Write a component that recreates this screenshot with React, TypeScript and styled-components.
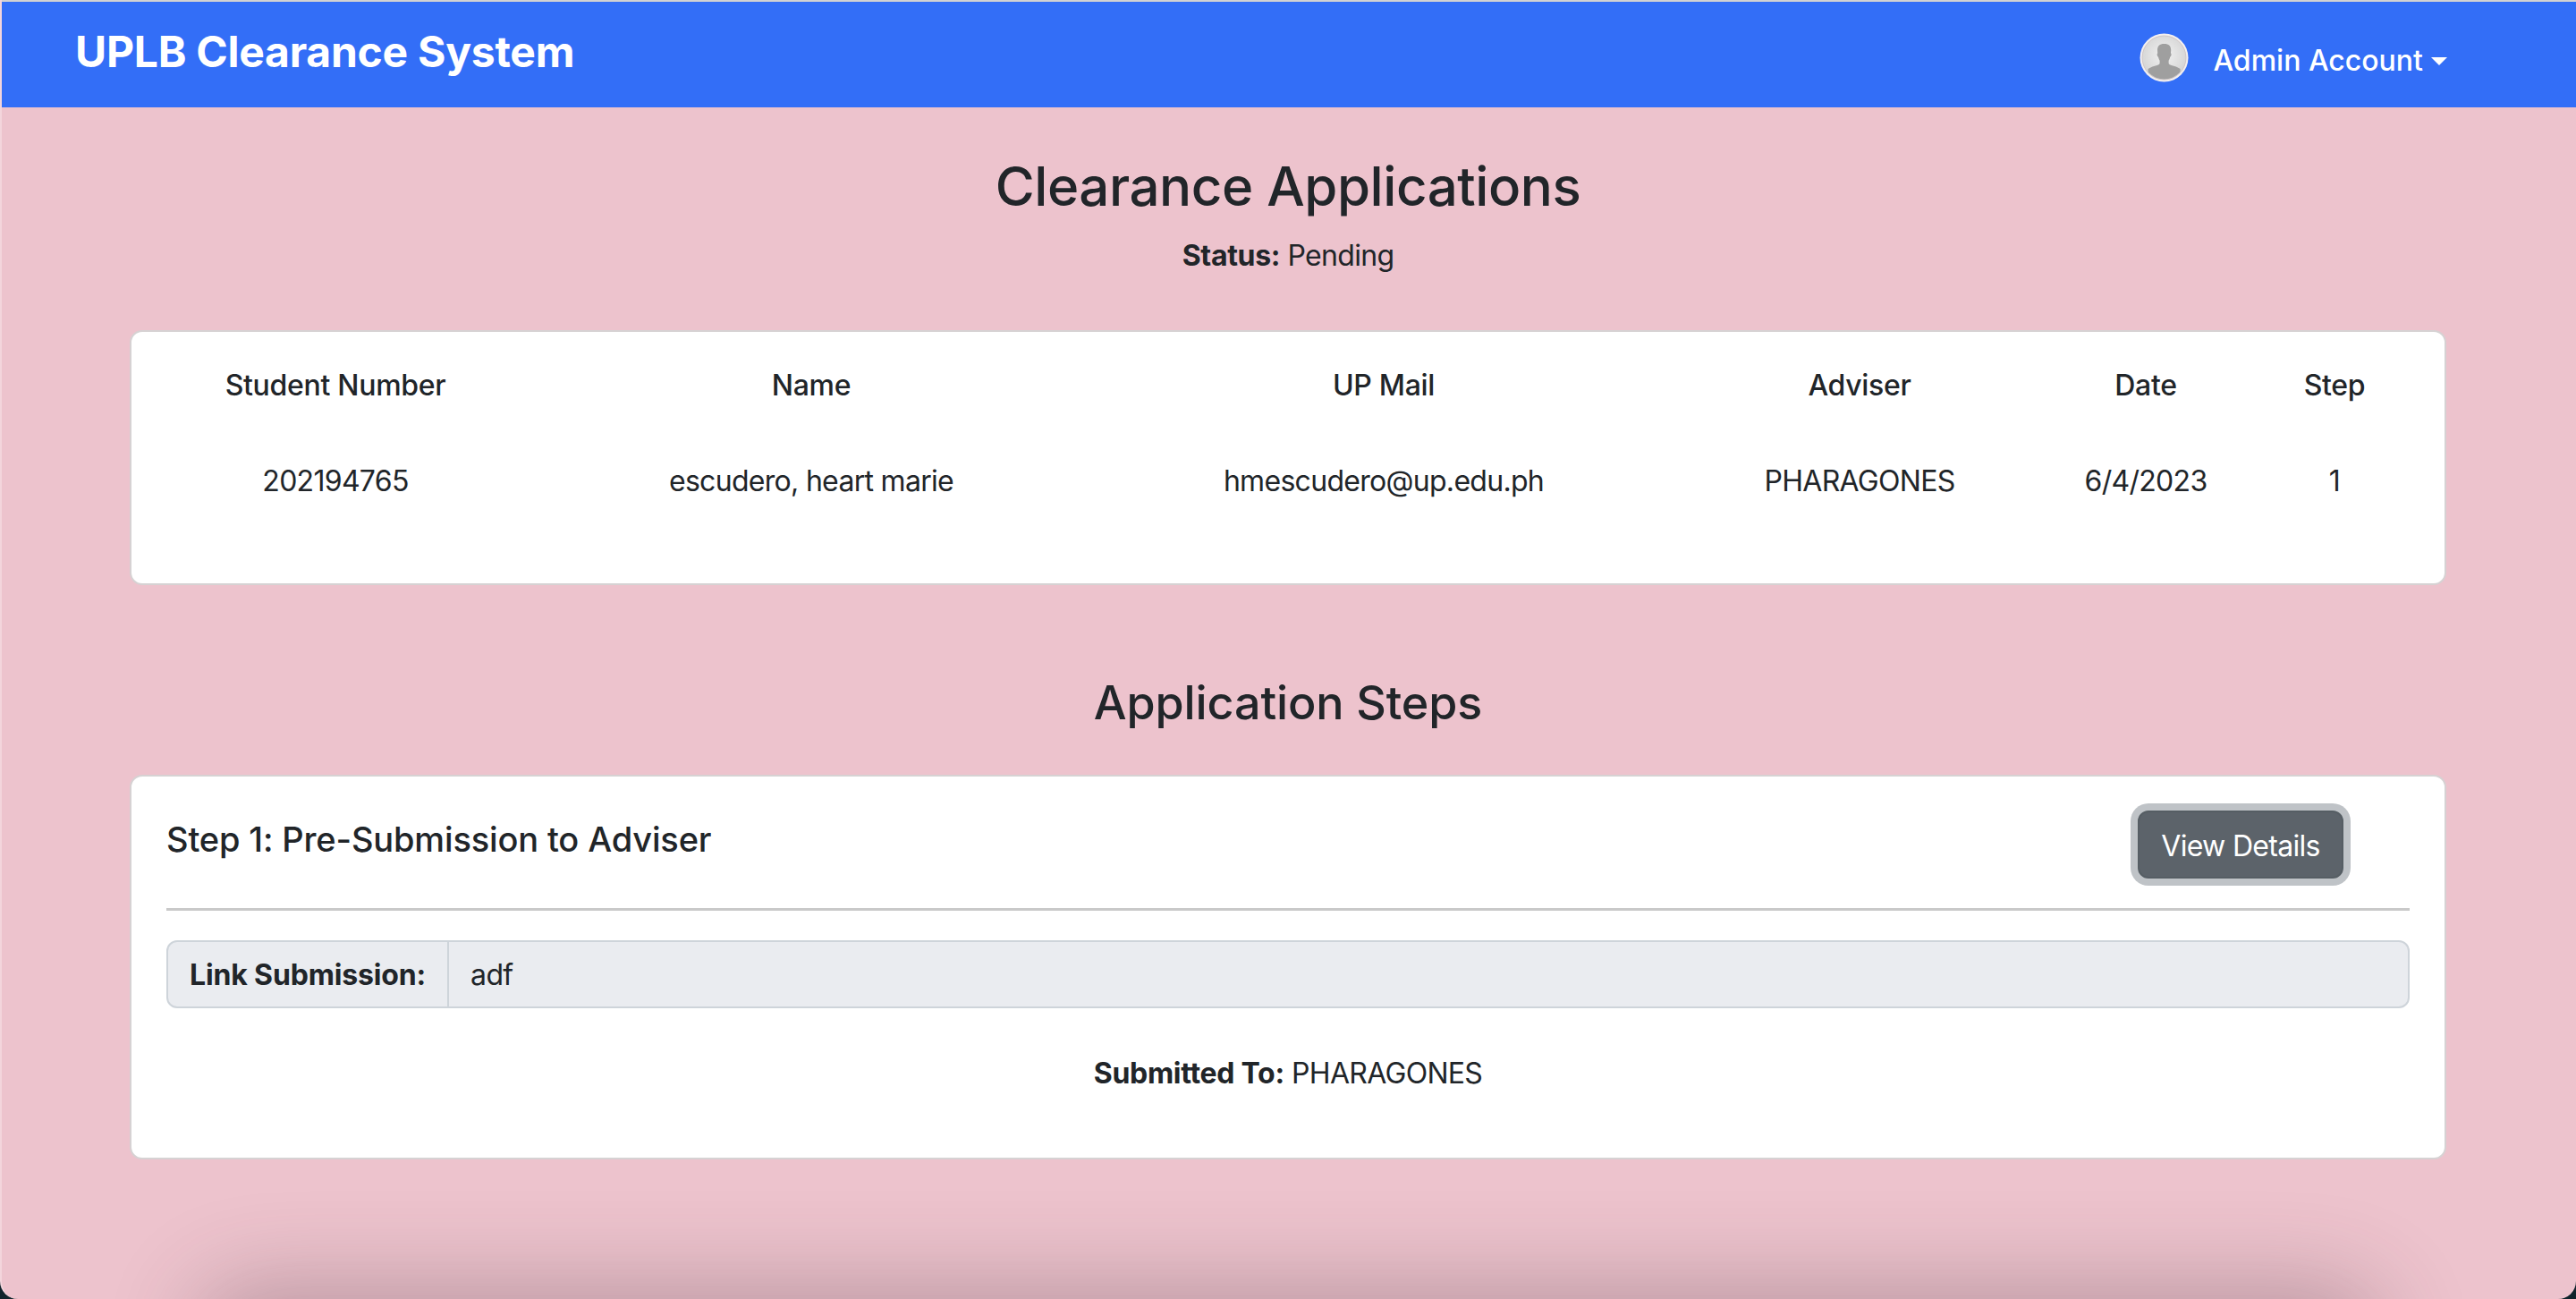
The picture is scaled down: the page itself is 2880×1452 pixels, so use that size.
import React from 'react'
import styled, { createGlobalStyle } from 'styled-components'

const GlobalStyle = createGlobalStyle`
    html, body {
        margin: 0px;
        padding: 0px;
        background-color: #10232b;
    }
    body {
        font-family: Inter, "Liberation Sans", sans-serif;
        font-size: 32px;
        line-height: 48px;
        letter-spacing: -0.7px;
        color: #212529;
    }
    strong {
        letter-spacing: -0.3px;
    }
`

const Page = styled.div`
    position: relative;
    height: 1452px;
    overflow: hidden;
    background-color: #edc3cd;
    border-radius: 0 0 20px 20px;
    border-left: 2px solid #f3d5dc;
    box-sizing: border-box;
`
const BottomShadow = styled.div`
    position: absolute;
    left: 250px;
    right: 250px;
    top: 1470px;
    height: 60px;
    border-radius: 30px;
    box-shadow: 0 0 100px 34px rgba(70, 50, 60, 0.3);
`
const Navbar = styled.nav`
    height: 120px;
    box-sizing: border-box;
    border-top: 2px solid #d2d2d2;
    margin-left: -2px;
    background-color: #336ef7;
    display: flex;
    justify-content: space-between;
    padding: 0 144px 0 84px;
    color: white;
`
const Brand = styled.div`
    font-size: 48px;
    font-weight: 700;
    letter-spacing: -0.25px;
    line-height: 58px;
    margin-top: 27px;
`
const Account = styled.div`
    display: flex;
    align-items: center;
    margin-top: 14px;
    font-weight: 500;
    letter-spacing: 0px;
`
const Avatar = styled.svg`
    width: 55px;
    height: 55px;
    margin-right: 27px;
    margin-bottom: 8px;
`
const Caret = styled.span`
    width: 0px;
    height: 0px;
    margin-left: 9px;
    border-top: 9px solid white;
    border-left: 9px solid transparent;
    border-right: 9px solid transparent;
`
const Content = styled.main`
    padding: 0 145px 0 143px;
    display: flex;
    flex-direction: column;
`
const Title = styled.h2`
    margin: 52px 0 0 0;
    font-size: 60px;
    line-height: 72px;
    font-weight: 500;
    letter-spacing: -0.45px;
    text-align: center;
`
const SubTitle = styled.p`
    margin: 18px 0 59px 0;
    text-align: center;
`
const SectionTitle = styled.h3`
    margin: 100px 0 0 0;
    height: 112px;
    font-size: 52px;
    line-height: 64px;
    font-weight: 500;
    letter-spacing: -0.1px;
    text-align: center;
`
const Card = styled.section`
    box-sizing: border-box;
    background-color: white;
    border: 2px solid #d6d2d3;
    border-radius: 14px;
`
const TableCard = styled(Card)`
    height: 285px;
    padding: 6px 22px 0 14px;
`
const Row = styled.div`
    display: grid;
    grid-template-columns: 428px 636px 644px 420px 220px 202px;
    height: 107px;
    align-items: center;
    text-align: center;
`
const HeadRow = styled(Row)`
    font-weight: 500;
    letter-spacing: -0.3px;
`
const StepCard = styled(Card)`
    height: 430px;
    padding: 0 39px;
`
const StepHeader = styled.div`
    display: flex;
    justify-content: space-between;
    height: 150px;
    box-sizing: border-box;
    border-bottom: 3px solid #c9c9c9;
    padding: 31px 74px 0 0;
`
const StepTitle = styled.h5`
    margin: 0px;
    font-size: 38px;
    line-height: 48px;
    font-weight: 500;
    letter-spacing: -0.15px;
    margin-top: 15px;
`
const DetailsButton = styled.button`
    box-sizing: border-box;
    width: 230px;
    height: 76px;
    margin: 7px 0 0 0;
    padding: 3px 0 0 0;
    font: inherit;
    letter-spacing: -0.7px;
    color: white;
    background-color: #5c636a;
    border: 2px solid #565e64;
    border-radius: 12px;
    box-shadow: 0 0 0 8px #bfc3c7;
`
const InputGroup = styled.div`
    display: flex;
    height: 76px;
    box-sizing: border-box;
    margin-top: 33px;
    background-color: #eaecf0;
    border: 2px solid #ced4da;
    border-radius: 12px;
`
const InputLabel = styled.label`
    font-weight: 700;
    padding: 0 24px;
    line-height: 74px;
    letter-spacing: -0.15px;
    border-right: 2px solid #ced4da;
`
const InputValue = styled.span`
    padding: 0 24px;
    line-height: 74px;
`
const SubmittedTo = styled.p`
    margin: 49px 0 0 0;
    text-align: center;
`

const columns = ['Student Number', 'Name', 'UP Mail', 'Adviser', 'Date', 'Step']
const values = ['202194765', 'escudero, heart marie', 'hmescudero@up.edu.ph', 'PHARAGONES', '6/4/2023', '1']

const App = () => {
    return (
        <Page>
            <GlobalStyle />
            <Navbar>
                <Brand>UPLB Clearance System</Brand>
                <Account>
                    <Avatar viewBox="0 0 55 55">
                        <defs>
                            <radialGradient id="avatarBg" cx="50%" cy="45%" r="55%">
                                <stop offset="0%" stopColor="#f2f2f2" />
                                <stop offset="100%" stopColor="#d4d4d4" />
                            </radialGradient>
                            <clipPath id="avatarClip">
                                <circle cx="27.5" cy="27.5" r="24" />
                            </clipPath>
                        </defs>
                        <circle cx="27.5" cy="27.5" r="27" fill="#f4f0f0" />
                        <circle cx="27.5" cy="27.5" r="24.5" fill="url(#avatarBg)" stroke="#cfc6c6" strokeWidth="1" />
                        <path
                            clipPath="url(#avatarClip)"
                            d="M27.5 12c-5 0-7.5 2.5-7.5 7 0 1.5.3 2.5.2 3.5-.8.2-.6 1.8-.2 3 .3.8.6 1 1 1 .4 2 1 3.4 1.6 4.2v2.8c0 1.2-1 2-3 2.5-3.5.9-7 2-10 4V56h36V40c-3-2-6.5-3.1-10-4-2-.5-3-1.3-3-2.5v-2.8c.6-.8 1.2-2.2 1.6-4.2.4 0 .7-.2 1-1 .4-1.2.6-2.8-.2-3-.1-1 .2-2 .2-3.5 0-4.5-2.5-7-7.5-7z"
                            fill="#9f9f9f"
                        />
                    </Avatar>
                    Admin Account
                    <Caret />
                </Account>
            </Navbar>
            <Content>
                <Title>Clearance Applications</Title>
                <SubTitle><strong>Status:</strong> Pending</SubTitle>
                <TableCard>
                    <HeadRow>
                        {columns.map(c => <span key={c}>{c}</span>)}
                    </HeadRow>
                    <Row>
                        {values.map(v => <span key={v}>{v}</span>)}
                    </Row>
                </TableCard>
                <SectionTitle>Application Steps</SectionTitle>
                <StepCard>
                    <StepHeader>
                        <StepTitle>Step 1: Pre-Submission to Adviser</StepTitle>
                        <DetailsButton>View Details</DetailsButton>
                    </StepHeader>
                    <InputGroup>
                        <InputLabel>Link Submission:</InputLabel>
                        <InputValue>adf</InputValue>
                    </InputGroup>
                    <SubmittedTo><strong>Submitted To:</strong> PHARAGONES</SubmittedTo>
                </StepCard>
            </Content>
            <BottomShadow />
        </Page>
    )
}

export default App
